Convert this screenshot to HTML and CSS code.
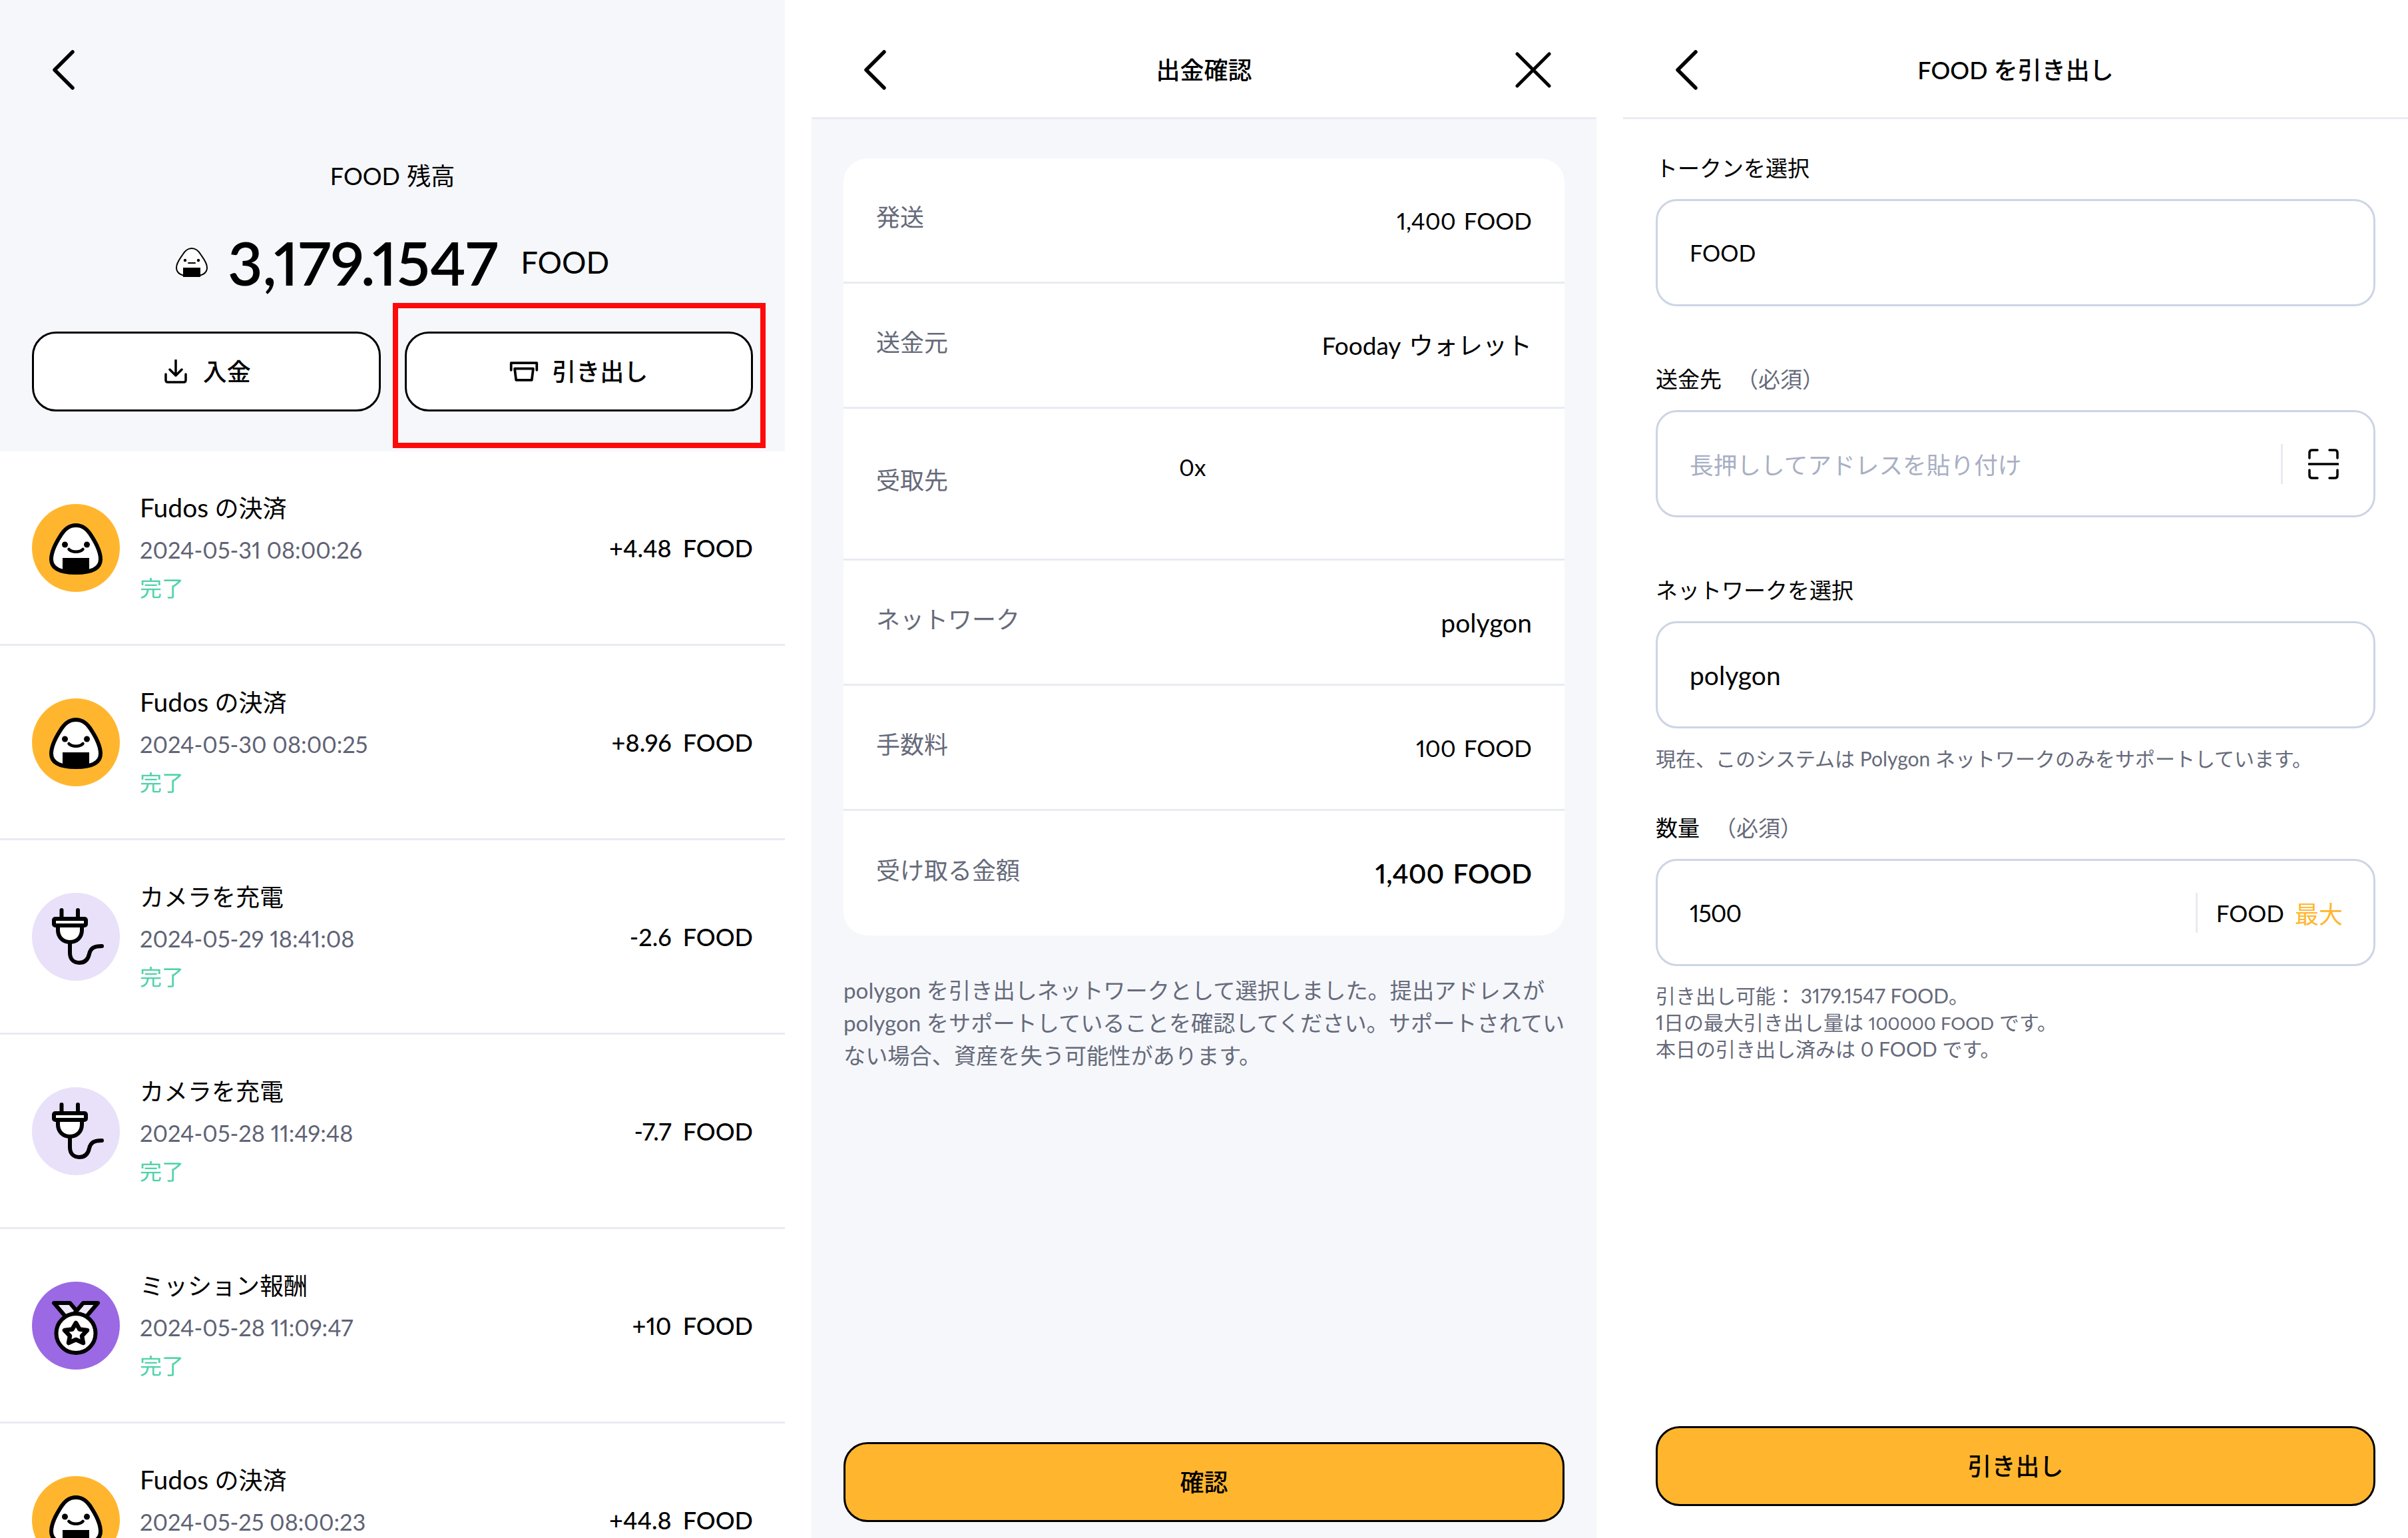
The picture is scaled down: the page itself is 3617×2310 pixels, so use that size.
FILE: index.html
```html
<!DOCTYPE html>
<html lang="ja">
<head>
<meta charset="utf-8">
<title>FOOD 引き出し</title>
<link rel="stylesheet" href="styles.css">
</head>
<body>
<svg class="defs" width="0" height="0" aria-hidden="true">
  <defs>
    <symbol id="back" viewBox="0 0 36 60"><path d="M32 3 L5 30 L32 57" fill="none" stroke="#000" stroke-width="5.5" stroke-linecap="round" stroke-linejoin="round"/></symbol>
    <symbol id="onigiri" viewBox="0 0 132 132">
      <path d="M66 32C76 32 83 37 90 49C97 60 103 72 103 83C103 98 88 103 66 103C44 103 29 98 29 83C29 72 35 60 42 49C49 37 56 32 66 32Z" fill="#fff"/>
      <path d="M46 81H86V102H46Z" fill="#000"/>
      <path d="M66 32C76 32 83 37 90 49C97 60 103 72 103 83C103 98 88 103 66 103C44 103 29 98 29 83C29 72 35 60 42 49C49 37 56 32 66 32Z" fill="none" stroke="#000" stroke-width="6"/>
      <circle cx="49.500" cy="61" r="4.500" fill="#000"/><circle cx="82.500" cy="61" r="4.500" fill="#000"/>
      <path d="M55.500 68C60 73 72 73 76.500 68" fill="none" stroke="#000" stroke-width="4.500" stroke-linecap="round"/>
    </symbol>
    <symbol id="plug" viewBox="0 0 132 132">
      <path d="M44.500 26V38M69 26V38" fill="none" stroke="#000" stroke-width="6" stroke-linecap="round"/>
      <path d="M39 48V56C39 67 47 74 57 74C67 74 75 67 75 56V48Z" fill="#fff" stroke="#000" stroke-width="6"/>
      <rect x="33" y="39" width="48" height="10" rx="2" fill="#fff" stroke="#000" stroke-width="6"/>
      <path d="M57 75V90C57 100 63 105 71 105C79 105 84 101 86 92C88 83 93 80 105 80" fill="none" stroke="#000" stroke-width="6" stroke-linecap="round"/>
    </symbol>
    <symbol id="medal" viewBox="0 0 132 132">
      <path d="M33 32H57L74 52H50Z" fill="#efe9fa" stroke="#000" stroke-width="6" stroke-linejoin="round"/>
      <path d="M99 32H77L60 52H82Z" fill="#efe9fa" stroke="#000" stroke-width="6" stroke-linejoin="round"/>
      <circle cx="66" cy="77.500" r="29.500" fill="#fff" stroke="#000" stroke-width="6"/>
      <path d="M66 62L71.500 71.500L83 73L75 81.500L77 92L66 87L55 92L57 81.500L49 73L60.500 71.500Z" fill="#fff" stroke="#000" stroke-width="6.500" stroke-linejoin="round"/>
    </symbol>
  </defs>
</svg>

<main class="screens">

  <section class="screen">
    <div class="hero">
      <header class="topbar topbar-plain">
        <svg class="back"><use href="#back"/></svg>
      </header>
      <p class="balance-label">FOOD 残高</p>
      <div class="balance">
        <svg class="balance-icon" viewBox="0 0 80 70">
          <path d="M40 14C46 14 50 17 54 24C58 30 63 36 63 43C63 53 53 56 40 56C27 56 17 53 17 43C17 36 22 30 26 24C30 17 34 14 40 14Z" fill="#fff"/>
          <path d="M27 43H53V57H27Z" fill="#000"/>
          <path d="M40 14C46 14 50 17 54 24C58 30 63 36 63 43C63 53 53 56 40 56C27 56 17 53 17 43C17 36 22 30 26 24C30 17 34 14 40 14Z" fill="none" stroke="#000" stroke-width="2"/>
          <circle cx="30" cy="32" r="2.200" fill="#000"/><circle cx="50" cy="32" r="2.200" fill="#000"/>
          <path d="M35 36H45" stroke="#000" stroke-width="2" stroke-linecap="round"/>
        </svg>
        <span class="balance-amount">3,179.1547</span>
        <span class="balance-unit">FOOD</span>
      </div>
      <div class="actions">
        <button class="action deposit" type="button">
          <svg class="action-icon" viewBox="0 0 34 36"><path d="M17 1V23M8 15L17 24L26 15M2 22V31C2 33 3 34 5 34H29C31 34 32 33 32 31V22" fill="none" stroke="#000" stroke-width="3.500" stroke-linecap="round" stroke-linejoin="round"/></svg>
          入金
        </button>
        <button class="action" type="button">
          <svg class="action-icon wide" viewBox="0 0 40 28"><path d="M2 12V2H38V12M7 10H33L31 26H9Z" fill="none" stroke="#000" stroke-width="3.500" stroke-linecap="round" stroke-linejoin="round"/></svg>
          引き出し
        </button>
        <div class="highlight"></div>
      </div>
    </div>
    <ul class="tx-list">
      <li class="tx">
        <span class="tx-icon yellow"><svg><use href="#onigiri"/></svg></span>
        <div class="tx-body"><p class="tx-title"><span class="latin">Fudos</span> の決済</p><p class="tx-date">2024-05-31 08:00:26</p><p class="tx-status">完了</p></div>
        <span class="tx-amount">+4.48 FOOD</span>
      </li>
      <li class="tx">
        <span class="tx-icon yellow"><svg><use href="#onigiri"/></svg></span>
        <div class="tx-body"><p class="tx-title"><span class="latin">Fudos</span> の決済</p><p class="tx-date">2024-05-30 08:00:25</p><p class="tx-status">完了</p></div>
        <span class="tx-amount">+8.96 FOOD</span>
      </li>
      <li class="tx">
        <span class="tx-icon lilac"><svg><use href="#plug"/></svg></span>
        <div class="tx-body"><p class="tx-title">カメラを充電</p><p class="tx-date">2024-05-29 18:41:08</p><p class="tx-status">完了</p></div>
        <span class="tx-amount">-2.6 FOOD</span>
      </li>
      <li class="tx">
        <span class="tx-icon lilac"><svg><use href="#plug"/></svg></span>
        <div class="tx-body"><p class="tx-title">カメラを充電</p><p class="tx-date">2024-05-28 11:49:48</p><p class="tx-status">完了</p></div>
        <span class="tx-amount">-7.7 FOOD</span>
      </li>
      <li class="tx">
        <span class="tx-icon violet"><svg><use href="#medal"/></svg></span>
        <div class="tx-body"><p class="tx-title">ミッション報酬</p><p class="tx-date">2024-05-28 11:09:47</p><p class="tx-status">完了</p></div>
        <span class="tx-amount">+10 FOOD</span>
      </li>
      <li class="tx">
        <span class="tx-icon yellow"><svg><use href="#onigiri"/></svg></span>
        <div class="tx-body"><p class="tx-title"><span class="latin">Fudos</span> の決済</p><p class="tx-date">2024-05-25 08:00:23</p><p class="tx-status">完了</p></div>
        <span class="tx-amount">+44.8 FOOD</span>
      </li>
    </ul>
  </section>

  <section class="screen tinted">
    <header class="topbar">
      <svg class="back"><use href="#back"/></svg>
      <h1 class="topbar-title">出金確認</h1>
      <svg class="close" viewBox="0 0 54 54"><path d="M3 3L51 51M51 3L3 51" fill="none" stroke="#000" stroke-width="5" stroke-linecap="round"/></svg>
    </header>
    <div class="confirm">
      <div class="card">
        <div class="card-row"><span class="card-label">発送</span><span class="card-value">1,400 FOOD</span></div>
        <div class="card-row"><span class="card-label">送金元</span><span class="card-value wide-text">Fooday ウォレット</span></div>
        <div class="card-row tall"><span class="card-label">受取先</span><span class="card-value address">0x</span></div>
        <div class="card-row"><span class="card-label">ネットワーク</span><span class="card-value network">polygon</span></div>
        <div class="card-row"><span class="card-label">手数料</span><span class="card-value">100 FOOD</span></div>
        <div class="card-row last"><span class="card-label">受け取る金額</span><span class="card-value strong">1,400 FOOD</span></div>
      </div>
      <p class="notice">polygon を引き出しネットワークとして選択しました。提出アドレスが<br>polygon をサポートしていることを確認してください。サポートされてい<br>ない場合、資産を失う可能性があります。</p>
      <button class="primary" type="button">確認</button>
    </div>
  </section>

  <section class="screen">
    <header class="topbar">
      <svg class="back"><use href="#back"/></svg>
      <h1 class="topbar-title">FOOD を引き出し</h1>
    </header>
    <form class="form">
      <p class="field-label first">トークンを選択</p>
      <div class="input"><span class="input-value token">FOOD</span></div>

      <p class="field-label">送金先<span class="required">（必須）</span></p>
      <div class="input">
        <span class="input-value placeholder">長押ししてアドレスを貼り付け</span>
        <span class="input-sep"></span>
        <svg class="scan" viewBox="0 0 46 46"><path d="M2 14V6C2 3.500 3.500 2 6 2H14M32 2H40C42.500 2 44 3.500 44 6V14M2 32V40C2 42.500 3.500 44 6 44H14M32 44H40C42.500 44 44 42.500 44 40V32M1 23H45" fill="none" stroke="#000" stroke-width="3.500" stroke-linecap="round"/></svg>
      </div>

      <p class="field-label">ネットワークを選択</p>
      <div class="input"><span class="input-value">polygon</span></div>
      <p class="hint">現在、このシステムは Polygon ネットワークのみをサポートしています。</p>

      <p class="field-label amount-label">数量<span class="required">（必須）</span></p>
      <div class="input">
        <span class="input-value digits">1500</span>
        <span class="input-sep"></span>
        <span class="unit">FOOD</span><span class="max">最大</span>
      </div>
      <p class="limits">引き出し可能： 3179.1547 FOOD。<br>1日の最大引き出し量は <span class="limit-num">100000 FOOD</span> です。<br>本日の引き出し済みは 0 FOOD です。</p>

      <button class="primary" type="button">引き出し</button>
    </form>
  </section>

</main>
</body>
</html>
```

FILE: styles.css
```css
* { box-sizing: border-box; }
html, body { margin: 0; padding: 0; background: #fff; }
body {
  font-family: Lato, "Noto Sans CJK JP", sans-serif;
  font-variant-numeric: proportional-nums;
  color: #000;
}
p, h1, ul { margin: 0; padding: 0; }
.defs { position: absolute; }

.screens {
  display: grid;
  grid-template-columns: repeat(3, 1179px);
  column-gap: 40px;
  height: 2310px;
  overflow: hidden;
}
.screen {
  height: 2310px;
  overflow: hidden;
  display: flex;
  flex-direction: column;
  background: #fff;
}
.screen.tinted { background: #f5f7fb; }

.topbar {
  flex: none;
  height: 179px;
  padding: 45px 68px 11px 68px;
  display: grid;
  grid-template-columns: 1fr auto 1fr;
  align-items: center;
  background: #fff;
  border-bottom: 3px solid #eaecf3;
}
.topbar-plain { background: transparent; border-bottom-color: transparent; }
.back { width: 36px; height: 60px; margin-left: 9px; }
.close { width: 54px; height: 54px; justify-self: end; }
.topbar-title { font-size: 36px; line-height: 50px; font-weight: 500; }

.hero { flex: none; height: 678px; background: #f5f7fb; }
.balance-label { margin-top: 60px; text-align: center; font-size: 36px; line-height: 50px; word-spacing: 1px; }
.balance {
  margin-top: 55px;
  height: 100px;
  padding-right: 16px;
  display: flex;
  align-items: center;
  justify-content: center;
}
.balance-icon { width: 80px; height: 70px; margin-right: 14px; }
.balance-amount { font-size: 91px; font-weight: 600; line-height: 100px; }
.balance-unit { font-size: 45.500px; margin-left: 34px; line-height: 100px; }

.actions {
  position: relative;
  margin-top: 54px;
  padding: 0 48px;
  display: grid;
  grid-template-columns: 1fr 1fr;
  column-gap: 36px;
}
.action {
  height: 120px;
  display: flex;
  align-items: center;
  justify-content: center;
  gap: 24px;
  font: inherit;
  font-size: 36px;
  font-weight: 500;
  color: #000;
  background: #fff;
  border: 3px solid #000;
  border-radius: 36px;
  padding: 0 0 4px;
}
.action.deposit { padding-left: 4px; }
.action-icon { width: 34px; height: 36px; margin-top: 4px; }
.action-icon.wide { width: 44px; height: 30px; margin-right: -4px; }
.highlight {
  position: absolute;
  left: 590px;
  top: -43px;
  width: 560px;
  height: 218px;
  border: 8px solid #ff0a0a;
  pointer-events: none;
}

.tx-list { list-style: none; }
.tx {
  height: 292px;
  padding: 0 48px;
  display: flex;
  align-items: center;
  gap: 30px;
  border-bottom: 3px solid #e9eaf3;
}
.tx-icon { flex: none; width: 132px; height: 132px; border-radius: 50%; }
.tx-icon svg { display: block; width: 132px; height: 132px; }
.yellow { background: #ffb62e; }
.lilac { background: #e9e0f9; }
.violet { background: #9b69e4; }
.tx-body { flex: 1; padding-bottom: 6px; }
.tx-title { font-size: 36px; line-height: 62px; }
.latin { font-size: 39px; }
.tx-date { font-size: 34.300px; line-height: 64px; color: #5f6375; }
.tx-status { font-size: 33px; line-height: 50px; color: #4ed2a9; }
.tx-amount { font-size: 36px; font-weight: 500; word-spacing: 8px; }

.confirm {
  flex: 1;
  padding: 59px 48px 24px;
  display: flex;
  flex-direction: column;
}
.card { background: #fff; border-radius: 36px; }
.card-row {
  height: 188px;
  padding: 0 49px;
  display: flex;
  justify-content: space-between;
  align-items: center;
  border-bottom: 3px solid #e9ebf2;
}
.card-row.tall { height: 228px; justify-content: flex-start; }
.card-row.last { border-bottom: 0; height: 187px; }
.card-label { font-size: 36px; line-height: 50px; color: #666a7a; position: relative; top: -5px; }
.card-row.tall .card-label { top: -6px; }
.card-value { font-size: 35px; line-height: 50px; word-spacing: 3px; }
.card-value.wide-text { font-size: 37px; }
.card-value.network { font-size: 39px; }
.card-value.address { position: relative; top: -26px; margin-left: 347px; }
.card-value.strong { font-size: 40.500px; font-weight: 600; }
.notice {
  margin-top: 58px;
  font-size: 33.200px;
  line-height: 49px;
  color: #666a7a;
  white-space: nowrap;
}
.primary {
  display: block;
  width: 100%;
  height: 120px;
  margin-top: auto;
  font: inherit;
  font-size: 36px;
  font-weight: 500;
  color: #000;
  background: #ffb62e;
  border: 3px solid #000;
  border-radius: 36px;
  padding: 0 0 4px;
}

.form {
  flex: 1;
  padding: 0 49px 48px;
  display: flex;
  flex-direction: column;
}
.field-label { font-size: 33px; line-height: 48px; margin-top: 85px; margin-bottom: 23px; }
.field-label.first { margin-top: 49px; }
.field-label.amount-label { margin-top: 58px; }
.required { color: #666a7a; margin-left: 22px; }
.input {
  height: 161px;
  padding: 0 48px;
  display: flex;
  align-items: center;
  border: 3px solid #ccd5e4;
  border-radius: 32px;
  background: #fff;
}
.input-value { flex: 1; font-size: 39px; }
.input-value.token { font-size: 34px; }
.input-value.digits { font-size: 36px; letter-spacing: -1px; }
.placeholder { font-size: 35.700px; color: #a8afc4; }
.input-sep { width: 3px; height: 60px; background: #e9ebf2; }
.scan { width: 46px; height: 46px; margin-left: 38px; margin-right: 4px; }
.unit { font-size: 35px; margin-left: 28px; }
.max { font-size: 36px; color: #ffb62e; margin-left: 16px; margin-right: -2px; }
.hint { margin-top: 23px; font-size: 30px; line-height: 44px; color: #666a7a; }
.limits { margin-top: 25px; font-size: 30px; line-height: 39.500px; color: #666a7a; }
.limit-num { font-size: 27.500px; }
.form .primary { margin-top: auto; }
```
